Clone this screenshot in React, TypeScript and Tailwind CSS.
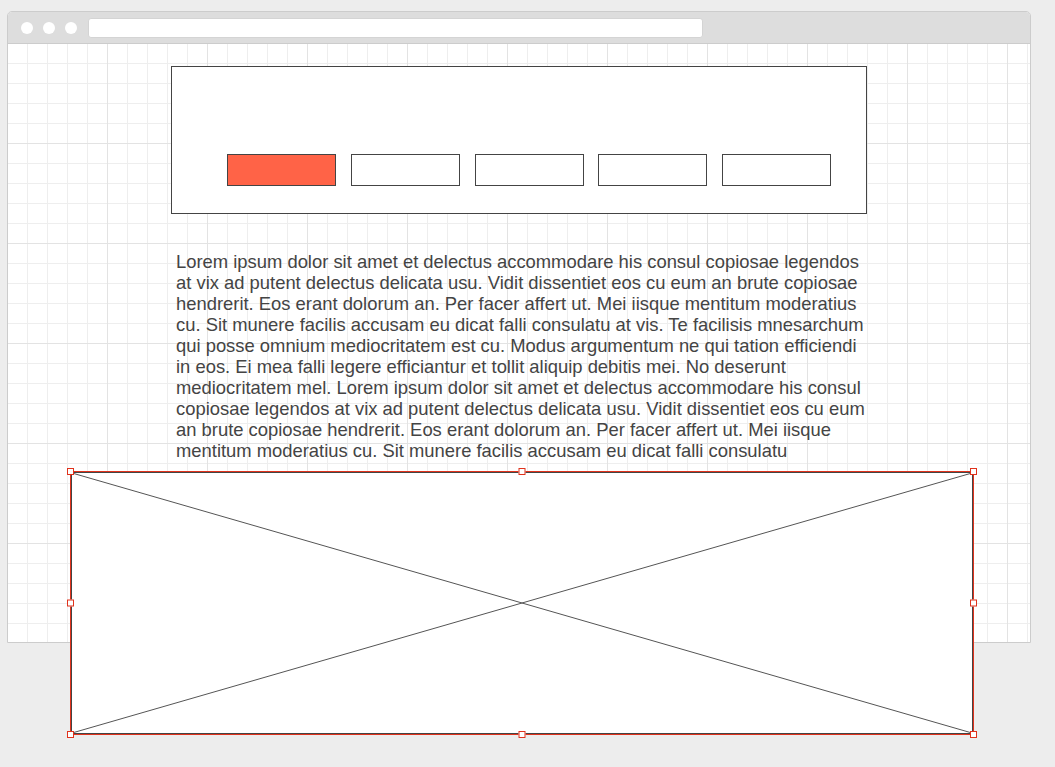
import React from "react";

const navItems = [
  { id: 1, active: true },
  { id: 2, active: false },
  { id: 3, active: false },
  { id: 4, active: false },
  { id: 5, active: false },
];

const loremText =
  "Lorem ipsum dolor sit amet et delectus accommodare his consul copiosae legendos at vix ad putent delectus delicata usu. Vidit dissentiet eos cu eum an brute copiosae hendrerit. Eos erant dolorum an. Per facer affert ut. Mei iisque mentitum moderatius cu. Sit munere facilis accusam eu dicat falli consulatu at vis. Te facilisis mnesarchum qui posse omnium mediocritatem est cu. Modus argumentum ne qui tation efficiendi in eos. Ei mea falli legere efficiantur et tollit aliquip debitis mei. No deserunt mediocritatem mel. Lorem ipsum dolor sit amet et delectus accommodare his consul copiosae legendos at vix ad putent delectus delicata usu. Vidit dissentiet eos cu eum an brute copiosae hendrerit. Eos erant dolorum an. Per facer affert ut. Mei iisque mentitum moderatius cu. Sit munere facilis accusam eu dicat falli consulatu";

// Small square handle shown around the selected element
function Handle({ className }: { className: string }) {
  return (
    <div
      className={`absolute w-[7px] h-[7px] bg-white border border-[#e0321c] ${className}`}
    />
  );
}

export default function App() {
  return (
    <div className="relative w-[1055px] h-[767px] bg-[#ededed] pt-[11px] pl-[7px] overflow-hidden font-['Liberation_Sans',Arial,sans-serif]">
      {/* Browser window */}
      <div className="w-[1024px] h-[632px] border border-[#cccccc] rounded-t-[5px] bg-white flex flex-col overflow-hidden">
        <div className="h-[32px] shrink-0 bg-[#dddddd] border-b border-[#cccccc] flex items-center gap-[10px] pl-[13px]">
          <div className="w-[12px] h-[12px] rounded-full bg-white" />
          <div className="w-[12px] h-[12px] rounded-full bg-white" />
          <div className="w-[12px] h-[12px] rounded-full bg-white" />
          <div className="w-[615px] h-[20px] ml-[1px] rounded-[3px] bg-white border border-[#d4d4d4]" />
        </div>

        {/* Canvas with grid */}
        <div className="flex-1 bg-white bg-[image:linear-gradient(to_right,transparent_99px,#e3e3e3_99px),linear-gradient(to_bottom,transparent_99px,#e3e3e3_99px),linear-gradient(to_right,transparent_19px,#eeeeee_19px),linear-gradient(to_bottom,transparent_19px,#eeeeee_19px)] bg-[size:100px_100px,100px_100px,20px_20px,20px_20px] pl-[163px] pt-[22px]">
          <div className="w-[696px] h-[148px] border border-[#444444] bg-white flex justify-between pl-[55px] pr-[35px] pt-[87px]">
            {navItems.map((item) => (
              <div
                key={item.id}
                className={`w-[109px] h-[32px] border border-[#444444] ${
                  item.active ? "bg-[#ff6347]" : "bg-white"
                }`}
              />
            ))}
          </div>

          <p className="w-[699px] mt-[37px] pl-[5px] text-[18.4px] leading-[21px] text-[#444444]">
            {loremText}
          </p>
        </div>
      </div>

      {/* Selected image placeholder, lying over the window */}
      <div className="absolute left-[70px] top-[471px] w-[904px] h-[264px] border border-[#e0321c]">
        <div className="w-full h-full border border-[#444444] bg-white">
          <svg
            className="w-full h-full block"
            viewBox="0 0 100 100"
            preserveAspectRatio="none"
          >
            <line x1="0" y1="0" x2="100" y2="100" stroke="#555555" strokeWidth="1" vectorEffect="non-scaling-stroke" />
            <line x1="100" y1="0" x2="0" y2="100" stroke="#555555" strokeWidth="1" vectorEffect="non-scaling-stroke" />
          </svg>
        </div>
        <Handle className="-left-[4px] -top-[4px]" />
        <Handle className="left-1/2 -translate-x-1/2 -top-[4px]" />
        <Handle className="-right-[4px] -top-[4px]" />
        <Handle className="-left-[4px] top-1/2 -translate-y-1/2" />
        <Handle className="-right-[4px] top-1/2 -translate-y-1/2" />
        <Handle className="-left-[4px] -bottom-[4px]" />
        <Handle className="left-1/2 -translate-x-1/2 -bottom-[4px]" />
        <Handle className="-right-[4px] -bottom-[4px]" />
      </div>
    </div>
  );
}
